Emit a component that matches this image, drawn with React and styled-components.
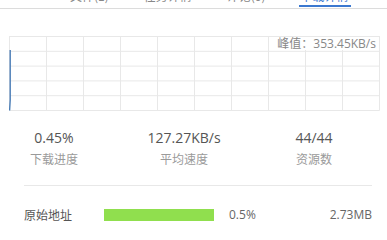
import React from "react";
import styled, { createGlobalStyle } from "styled-components";

const Global = createGlobalStyle`
  html, body { margin: 0; padding: 0; background: #fff; overflow: hidden; }
  body { font-family: "Open Sans", "Noto Sans CJK SC", sans-serif; }
`;

const Page = styled.div`
  width: 387px;
  height: 222px;
  display: flex;
  flex-direction: column;
`;

const TabBar = styled.div`
  display: flex;
  align-items: flex-end;
  height: 8px;
  border-bottom: 1px solid #dcdcdc;
  padding-left: 68px;
  gap: 31px;
`;

const Tab = styled.div`
  font-family: "Noto Sans CJK SC", sans-serif;
  font-size: 12px;
  line-height: 12px;
  padding: 0 2px 3px;
  margin-bottom: 1px;
  white-space: nowrap;
  color: ${(p) => (p.$active ? "#3b78d0" : "#888")};
  border-bottom: 2px solid ${(p) => (p.$active ? "#3b78d0" : "transparent")};
`;

const ChartBox = styled.div`
  position: relative;
  margin: 27px 0 0 9px;
  width: 371px;
  height: 75px;
`;

const Peak = styled.div`
  position: absolute;
  top: 1px;
  right: 1px;
  height: 13px;
  padding: 0 3px 0 4px;
  background: #fff;
  font-size: 12px;
  line-height: 13px;
  color: #888;
  white-space: nowrap;
`;

const Stats = styled.div`
  display: grid;
  grid-template-columns: repeat(3, 130px);
  margin: 17px 0 0 -11px;
`;

const Stat = styled.div`
  display: flex;
  flex-direction: column;
  align-items: center;
  gap: 3px;
`;

const Value = styled.div`
  font-size: 14px;
  line-height: 20px;
  color: #555;
`;

const Label = styled.div`
  font-family: "Noto Sans CJK SC", sans-serif;
  font-size: 12px;
  line-height: 16px;
  color: #9a9a9a;
`;

const Divider = styled.div`
  height: 1px;
  background: #e8e8e8;
  margin: 18px 15px 0 24px;
`;

const Row = styled.div`
  display: grid;
  grid-template-columns: 80px 110px 1fr auto;
  align-items: center;
  margin: 23px 15px 0 24px;
  height: 12px;
  font-size: 12px;
  color: #666;
`;

const Name = styled.div`
  font-family: "Noto Sans CJK SC", sans-serif;
  color: #555;
  line-height: 12px;
`;

const Bar = styled.div`
  height: 12px;
  background: #eee;
`;

const Fill = styled.div`
  height: 100%;
  background: #90df4e;
`;

const Pct = styled.div`
  padding-left: 15px;
  line-height: 12px;
`;

const Size = styled.div`
  text-align: right;
  line-height: 12px;
`;

function Grid() {
  const cols = Array.from({ length: 11 }, (_, i) => 0.5 + i * 37);
  const rows = Array.from({ length: 6 }, (_, j) => 0.5 + j * 14.8);
  return (
    <svg width="371" height="75" viewBox="0 0 371 75" style={{ display: "block" }}>
      {cols.map((x) => (
        <line key={"c" + x} x1={x} y1="0" x2={x} y2="74.5" stroke="#e8e8e8" strokeWidth="1" />
      ))}
      {rows.map((y) => (
        <line key={"r" + y} x1="0" y1={y} x2="370.5" y2={y} stroke="#e8e8e8" strokeWidth="1" />
      ))}
      <polyline points="1.2,14 1.2,64 0.6,74.5" fill="none" stroke="#4a7db6" strokeWidth="1.4" />
    </svg>
  );
}

export default function App() {
  return (
    <>
      <Global />
      <Page>
        <TabBar>
          <Tab>文件(1)</Tab>
          <Tab>任务详情</Tab>
          <Tab>评论(0)</Tab>
          <Tab $active>下载详情</Tab>
        </TabBar>
        <ChartBox>
          <Grid />
          <Peak>峰值：353.45KB/s</Peak>
        </ChartBox>
        <Stats>
          <Stat>
            <Value>0.45%</Value>
            <Label>下载进度</Label>
          </Stat>
          <Stat>
            <Value>127.27KB/s</Value>
            <Label>平均速度</Label>
          </Stat>
          <Stat>
            <Value>44/44</Value>
            <Label>资源数</Label>
          </Stat>
        </Stats>
        <Divider />
        <Row>
          <Name>原始地址</Name>
          <Bar>
            <Fill style={{ width: "100%" }} />
          </Bar>
          <Pct>0.5%</Pct>
          <Size>2.73MB</Size>
        </Row>
      </Page>
    </>
  );
}
